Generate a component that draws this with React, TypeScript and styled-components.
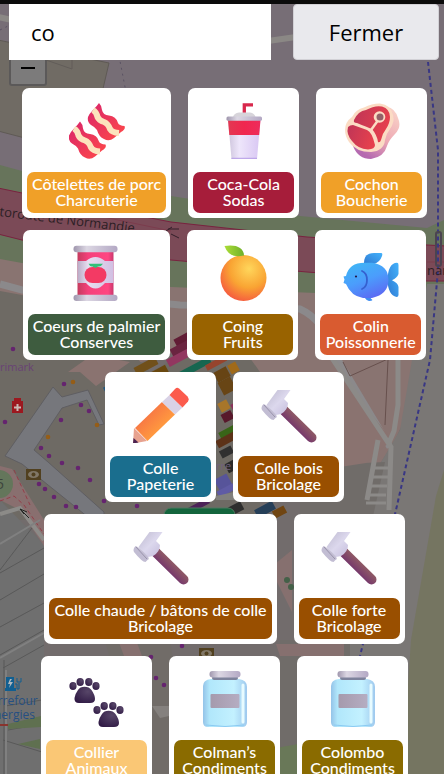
import React, { useState } from "react";
import styled, { createGlobalStyle } from "styled-components";

const GlobalStyle = createGlobalStyle`
  *, *::before, *::after { box-sizing: border-box; }
  html, body { margin: 0; height: 100%; background: #726c6c; }
  button, input { font-family: inherit; }
`;

const Screen = styled.div`
  position: relative;
  display: flex;
  flex-direction: column;
  height: 100vh;
  overflow: hidden;
  border-top: 4px solid #0b0b0b;
  font-family: "Open Sans", "Noto Sans", sans-serif;
`;

const MapLayer = styled.div`
  position: absolute;
  inset: -4px 0 0;
`;

const MapSvg = styled.svg`
  display: block;
  width: 100%;
  height: 100%;
`;

const ZoomOut = styled.button`
  position: absolute;
  left: 9px;
  top: 50px;
  width: 38px;
  height: 36px;
  padding: 0;
  display: grid;
  place-items: center;
  border: 2px solid #5b5959;
  border-radius: 3px;
  background: #7c7b7b;
`;

const SearchBar = styled.form`
  position: relative;
  display: flex;
  gap: 22px;
  padding: 0 5px 0 9px;
`;

const SearchInput = styled.input`
  flex: 1;
  min-width: 0;
  height: 56px;
  padding: 0 22px;
  border: 0;
  border-radius: 0;
  outline: 0;
  background: #fff;
  color: #000;
  font-size: 22px;
`;

const CloseButton = styled.button`
  flex: 0 0 146px;
  height: 56px;
  border: 1px solid #d2d1d6;
  border-radius: 4px;
  background: #e9e9ed;
  color: #000;
  font-size: 22px;
`;

const Results = styled.main`
  position: relative;
  flex: 1;
  min-height: 0;
  overflow-y: auto;
  scrollbar-width: none;
  padding: 28px 12px 28px 17px;
  display: flex;
  flex-wrap: wrap;
  justify-content: center;
  align-content: flex-start;
  gap: 12px 17px;
`;

const Card = styled.button`
  display: flex;
  flex-direction: column;
  align-items: center;
  gap: 13px;
  padding: 15px 5px 5px;
  border: 0;
  border-radius: 7px;
  background: #fff;
`;

const CardIcon = styled.svg`
  display: block;
  width: 56px;
  height: 56px;
`;

const Label = styled.span<{ $color: string }>`
  display: flex;
  flex-direction: column;
  min-width: 101px;
  padding: 4px 5px 5px;
  border-radius: 7px;
  background: ${(p) => p.$color};
  color: #fff;
  font: 500 16px/16px Lato, "Open Sans", sans-serif;
  text-align: center;
  white-space: nowrap;
`;

const gradients = (
  <defs>
    <linearGradient id="bacon" x1="0" y1="0" x2="1" y2="1">
      <stop offset="0" stopColor="#d9256b" /><stop offset="1" stopColor="#ff4a48" />
    </linearGradient>
    <linearGradient id="redBand"><stop offset="0" stopColor="#e33852" /><stop offset=".5" stopColor="#f0274f" /><stop offset="1" stopColor="#ee2c5c" /></linearGradient>
    <linearGradient id="cupBody"><stop offset="0" stopColor="#cdc4dc" /><stop offset=".35" stopColor="#eee6fb" /><stop offset="1" stopColor="#d8c6f3" /></linearGradient>
    <linearGradient id="metal"><stop offset="0" stopColor="#9f96ad" /><stop offset=".3" stopColor="#dcd7e3" /><stop offset="1" stopColor="#b3a8c4" /></linearGradient>
    <linearGradient id="fat" x1="1" y1="0" x2=".4" y2="1"><stop offset="0" stopColor="#fbd9cb" /><stop offset=".6" stopColor="#eda9b4" /><stop offset="1" stopColor="#b56ab0" /></linearGradient>
    <linearGradient id="meat" x1="0" y1="0" x2="1" y2=".3"><stop offset="0" stopColor="#bf3557" /><stop offset="1" stopColor="#e5404d" /></linearGradient>
    <linearGradient id="canBody"><stop offset="0" stopColor="#c53b5e" /><stop offset=".3" stopColor="#f5417b" /><stop offset=".85" stopColor="#ff4682" /><stop offset="1" stopColor="#c9386e" /></linearGradient>
    <linearGradient id="canWhite"><stop offset="0" stopColor="#b9abc5" /><stop offset=".3" stopColor="#e8def1" /><stop offset="1" stopColor="#d1bfe2" /></linearGradient>
    <radialGradient id="fruit" cx=".62" cy=".3" r=".75"><stop offset="0" stopColor="#ffd65b" /><stop offset=".55" stopColor="#f9a433" /><stop offset="1" stopColor="#f5583f" /></radialGradient>
    <linearGradient id="leaf"><stop offset="0" stopColor="#abdd37" /><stop offset="1" stopColor="#6faf2a" /></linearGradient>
    <linearGradient id="fish" x1=".2" y1="0" x2=".7" y2="1"><stop offset="0" stopColor="#3fb6f5" /><stop offset=".5" stopColor="#4b9dfc" /><stop offset="1" stopColor="#5c69f3" /></linearGradient>
    <linearGradient id="fin" x1="0" y1="1" x2="1" y2="0"><stop offset="0" stopColor="#2f78d2" /><stop offset="1" stopColor="#43b2fb" /></linearGradient>
    <linearGradient id="pencil" x1="0" y1="0" x2="1" y2="1"><stop offset=".2" stopColor="#f56e45" /><stop offset=".65" stopColor="#ff983f" /><stop offset="1" stopColor="#f1823c" /></linearGradient>
    <linearGradient id="wood" x1=".7" y1=".3" x2=".35" y2=".65"><stop offset="0" stopColor="#966363" /><stop offset="1" stopColor="#74366c" /></linearGradient>
    <linearGradient id="steel" x1="0" y1="0" x2="1" y2="1"><stop offset="0" stopColor="#bdb9cf" /><stop offset=".5" stopColor="#dcd8ed" /><stop offset="1" stopColor="#c3badb" /></linearGradient>
    <radialGradient id="paw" cx=".65" cy=".3" r=".8"><stop offset="0" stopColor="#574668" /><stop offset="1" stopColor="#301a45" /></radialGradient>
    <linearGradient id="glass"><stop offset="0" stopColor="#94c3e8" /><stop offset=".15" stopColor="#b1e7fb" /><stop offset=".7" stopColor="#c3f1ff" /><stop offset="1" stopColor="#9fc9ee" /></linearGradient>
    <linearGradient id="tag"><stop offset="0" stopColor="#a59aac" /><stop offset="1" stopColor="#b5adc2" /></linearGradient>
  </defs>
);

const baconStrip = (
  <>
    <path d="M30 0Q33 3 33 7Q34 12 40 12.500Q47 13 49 20Q50 22.500 55.500 23Q57 26 52 29L45 35Q40 39 35 36Q30 34 28 27Q26 24 22 22Q18 19 19 14Q20 11 24 7Q28 3 30 0Z" fill="url(#bacon)" />
    <path d="M24 7Q27.500 9 28.500 14Q30 17.500 35 19Q39 20.500 41 26Q43 29.500 50 30" fill="none" stroke="#fce3bd" strokeWidth="6" />
  </>
);

const pawPrint = (
  <g fill="url(#paw)">
    <ellipse cx="4" cy="15" rx="3.600" ry="4" /><ellipse cx="11.200" cy="11" rx="3.700" ry="4.100" />
    <ellipse cx="19.800" cy="11" rx="3.700" ry="4.100" /><ellipse cx="27" cy="15" rx="3.600" ry="4" />
    <path d="M9 19C11 14.500 20 14.500 22.500 19Q26 24 26 28Q26 32 21 32H10Q5 32 5.500 27Q6 23 9 19Z" />
  </g>
);

const icons: Record<string, React.ReactNode> = {
  bacon: <>{baconStrip}<g transform="translate(-19 18.500)">{baconStrip}</g></>,
  cup: (
    <>
      <path d="M28.300 12V1.800H37" fill="none" stroke="#d8284c" strokeWidth="3.300" />
      <path d="M12 16H44.500L41 56H15.500Z" fill="url(#cupBody)" />
      <path d="M12 17H44.500L43.200 32H13.300Z" fill="url(#redBand)" />
      <path d="M15.400 55.300H41" stroke="#b49be6" strokeWidth="1" />
      <path d="M17 14Q18 10 23 9.500H34Q38.500 10 39.500 14Z" fill="#d7d4da" />
      <rect x="10.500" y="13.600" width="35.500" height="4.200" rx="1.500" fill="url(#metal)" />
    </>
  ),
  meat: (
    <>
      <path d="M9 43Q14 56 27 56Q40 54 43 43Q45 37 51 31Q58 24 54 15Q51 5 43 4Z" fill="url(#fat)" />
      <path d="M1 27Q1 19 8 14Q12 6 20 4.500Q28 .500 36 .600Q47 2 49 12Q51 19 46 26Q42 31 41 37Q40 48 27 49Q12 49 5 39Q1 33 1 27Z" fill="#fbdcc4" />
      <path d="M4 24Q6 22 9 22L23 27Q28 29 31 42Q31 46 24 46.500Q14 46 8 38Q2 31 4 24Z" fill="url(#meat)" />
      <path d="M10 17Q14 8 22 7Q31 2 38 3.500Q46 6 46 14Q46 20 42 26Q38 31 37 37Q36 40 34 39Q33 32 28 26Q23 24 13 20Q9 20 10 17Z" fill="url(#meat)" />
      <path d="M27 27L35 16" stroke="#fbdcc4" strokeWidth="2.500" />
      <circle cx="35.500" cy="14" r="5.800" fill="#fbdcc4" /><circle cx="36" cy="14" r="3.500" fill="#936169" />
    </>
  ),
  can: (
    <>
      <rect x="9.500" y="4" width="36" height="50" fill="url(#canBody)" />
      <path d="M9.500 16H18Q27.500 8 37 16H45.500V38H37Q27.500 49 18 38H9.500Z" fill="url(#canWhite)" />
      <rect x="16.500" y="22" width="22" height="16" rx="8" fill="#f33a64" />
      <path d="M20.500 18.800H35Q33 22 30 21.500L27.500 23L24.500 21.500Q22 22 20.500 18.800Z" fill="#32c179" />
      <rect x="5.500" y=".700" width="44" height="6.500" rx="3" fill="url(#metal)" />
      <rect x="5.500" y="49.700" width="44" height="6.300" rx="3" fill="url(#metal)" />
    </>
  ),
  fruit: (
    <>
      <circle cx="28.500" cy="33" r="23" fill="url(#fruit)" />
      <path d="M9.500 1Q20 -.500 25 3Q29 6 29 10.500Q14 14 9.500 1Z" fill="url(#leaf)" />
    </>
  ),
  fish: (
    <>
      <path d="M21 18Q21 8 31 8H38Q40 8 39 11Q37 17 31 19Z" fill="url(#fin)" />
      <path d="M21 52H27Q28 54 29.500 55Q29 56 26 56Q23 55 21 52Z" fill="#3f8df1" />
      <path d="M44.500 35Q45 18 54 17.700Q55.500 17.700 55.500 20V29Q54 33 49 35.300Q55 38 55.500 42V50Q55.500 52 53.500 52Q45 50 44.500 35Z" fill="url(#fin)" />
      <path d="M3 31Q6 17.500 22 17.700H29Q45.500 20 45.500 35Q45.500 49 29 53H20Q8 51 3 39L.500 38L1.500 34.500L.500 31.500Z" fill="url(#fish)" />
      <path d="M19 26Q24 28 24 35Q24 42 19 44" fill="none" stroke="#3560cf" strokeWidth="1.800" strokeLinecap="round" />
      <circle cx="13" cy="31.500" r="1.100" fill="#251744" />
    </>
  ),
  pencil: (
    <>
      <path d="M1 41L14 54L0 56.500Z" fill="#e7a28f" />
      <path d="M.500 51L5.500 55.500L0 56.500Z" fill="#4b2351" />
      <path d="M2 41L29 15L42 27.500L14.500 54Z" fill="url(#pencil)" />
      <path d="M29 15L36.500 8L49.500 20.500L42 27.500Z" fill="#d9d2e6" />
      <path d="M36.500 8L42 2Q44 0 46 1.500L54.500 9.500Q56.500 12 55 14.500L49.500 20.500Z" fill="#fb5b4d" />
    </>
  ),
  hammer: (
    <>
      <path d="M22.500 23L50.500 50.500" stroke="url(#wood)" strokeWidth="10" strokeLinecap="round" />
      <path d="M16.500 3H29.500L23 12L27 16Q27 23 20 27L15 28L5.500 18Z" fill="url(#steel)" />
      <path d="M2.500 17Q5 17 14.500 27Q17 30 14.500 31L12.500 33Q9 33 1 23Q-.500 20 2.500 17Z" fill="#c2bdd3" />
      <path d="M3 18L14 30" stroke="#9993ab" strokeWidth="1" />
    </>
  ),
  paws: <>{pawPrint}<g transform="translate(24 24)">{pawPrint}</g></>,
  jar: (
    <>
      <path d="M14 8H42Q50 9 50 16V51Q50 56 45 56H11Q6 56 6 51V15Q6 9 14 8Z" fill="url(#glass)" />
      <path d="M46 14V51" stroke="#e7fbff" strokeWidth="3" strokeLinecap="round" />
      <path d="M9 54Q28 57 47 54" fill="none" stroke="#8bcaf2" strokeWidth="1" />
      <rect x="15" y="5" width="26" height="4" rx="2" fill="#7e839c" />
      <rect x="12.500" y="0" width="31" height="6.500" rx="3" fill="url(#metal)" />
      <rect x="13.500" y="23" width="29" height="14" rx="1" fill="url(#tag)" />
    </>
  ),
};

type Product = { name: string; aisle: string; icon: string; color: string };

const products: Product[] = [
  { name: "Côtelettes de porc", aisle: "Charcuterie", icon: "bacon", color: "#f0a028" },
  { name: "Coca-Cola", aisle: "Sodas", icon: "cup", color: "#a61d3a" },
  { name: "Cochon", aisle: "Boucherie", icon: "meat", color: "#f0a028" },
  { name: "Coeurs de palmier", aisle: "Conserves", icon: "can", color: "#3e5c3f" },
  { name: "Coing", aisle: "Fruits", icon: "fruit", color: "#996300" },
  { name: "Colin", aisle: "Poissonnerie", icon: "fish", color: "#d95b30" },
  { name: "Colle", aisle: "Papeterie", icon: "pencil", color: "#1a6e8e" },
  { name: "Colle bois", aisle: "Bricolage", icon: "hammer", color: "#994f00" },
  { name: "Colle chaude / bâtons de colle", aisle: "Bricolage", icon: "hammer", color: "#994f00" },
  { name: "Colle forte", aisle: "Bricolage", icon: "hammer", color: "#994f00" },
  { name: "Collier", aisle: "Animaux", icon: "paws", color: "#fac775" },
  { name: "Colman’s", aisle: "Condiments", icon: "jar", color: "#8a6b00" },
  { name: "Colombo", aisle: "Condiments", icon: "jar", color: "#8a6b00" },
];

const purpleDots = [[64, 384], [81, 405], [89, 411], [61, 420], [5, 422], [41, 448], [49, 456], [62, 463], [78, 468], [90, 480], [39, 484], [45, 489], [54, 497], [66, 506], [76, 507], [104, 501], [137, 506], [13, 349], [182, 646], [151, 657], [156, 678], [164, 685]];
const orangeDots = [[73, 382], [97, 425], [48, 437]];

const stalls: [number, number, number, number, string][] = [
  [174, 334, 22, 8, "#611c35"], [170, 343, 26, 8, "#6a2440"], [166, 352, 32, 8, "#923760"], [178, 364, 34, 7, "#176650"],
  [205, 360, 22, 6, "#96442d"], [134, 362, 24, 8, "#71501a"], [148, 369, 20, 8, "#69480f"], [104, 384, 14, 8, "#235a80"],
  [215, 369, 14, 11, "#674414"], [229, 363, 9, 10, "#a06a19"], [220, 379, 14, 14, "#684515"], [232, 402, 10, 10, "#8b315b"],
  [219, 401, 10, 10, "#a8762a"], [222, 412, 11, 9, "#58182b"], [219, 428, 19, 8, "#386518"], [216, 436, 20, 8, "#5c3218"],
  [220, 448, 13, 8, "#303030"], [226, 461, 12, 10, "#292929"], [216, 476, 14, 12, "#57549a"], [217, 487, 18, 7, "#5f5ba5"],
  [229, 504, 14, 9, "#2e2e2e"], [255, 505, 20, 9, "#263f58"], [273, 508, 13, 8, "#704512"], [186, 503, 24, 6, "#4d2358"],
];

function StoreMap() {
  return (
    <MapSvg viewBox="0 0 444 774" preserveAspectRatio="xMidYMid slice" aria-hidden="true">
      {gradients}
      <path fill="#776e76" d="M0 0H444V260H0Z" />
      <path fill="#706b64" stroke="#5f5a55" d="M-2 40L109 63L98 110L90 155L-2 131Z" />
      <path fill="none" stroke="#625d59" d="M46 60L72 69V60" />
      <path fill="none" stroke="#8b8885" strokeWidth="6" d="M-2 17L12 20M268 41L296 37" />
      <path fill="none" stroke="#5a5263" strokeDasharray="2 4" d="M119 56L126 92M0 30L10 25" />
      <path fill="#67745b" d="M0 165L22 171L171 196L300 216L427 228L444 220V300H0Z" />
      <path fill="#897471" d="M0 259L22 263L171 287L316 293L427 290V372L395 440L380 464L345 467L300 400L200 345L80 380L0 300Z" />
      <path fill="#7b4a57" stroke="#79223f" d="M-2 188L22 193L171 222L307 237L427 245L446 246V281H427L307 272L171 260L22 240L-2 234Z" />
      <path stroke="#7b3c4d" d="M22 200L171 231M427 262H444" />
      <path stroke="#321f29" strokeWidth="1" fill="none" d="M168 229H179M166 231L172 227M171 234L179 238" />
      <text transform="translate(-17 214) rotate(7)" fontSize="13" fontWeight="500" fill="#2c2025">Autoroute de Normandie</text>
      <path fill="none" stroke="#8b898b" strokeWidth="7" d="M0 284L22 290L180 305L260 306L300 309Q325 320 338 360L390 447" />
      <path fill="#6e6a64" d="M0 291L22 295L110 330L150 372L230 330L260 372V520H0Z" />
      <path fill="#7a7775" d="M427 284H444V774H300V530L345 467L380 464L400 430L412 360Z" />
      <path fill="#706c69" d="M300 466L385 462L370 530H300ZM280 640H350V774H280Z" />
      <path fill="#8a7370" d="M290 370H336L392 440L366 463L340 467Z" />
      <path fill="#8a7370" d="M68 372L92 355L130 362L96 386L80 372Z" />
      <path fill="none" stroke="#8c8a88" strokeWidth="5" d="M332 358L391 447L389 510M398 350V405L394 431L388 445M378 440L367 500" />
      <path fill="none" stroke="#67504d" d="M343 362L350 376L390 358M388 360L385 425" />
      <path fill="none" stroke="#8c8a88" strokeWidth="3" d="M373 468H389M371 477H388M369 486H387M367 495H386M366 503H386" />
      <path fill="#76777c" stroke="#5f5e62" d="M53 387L62 397L88 390L104 424L99 425L87 400L62 408L34 450L48 462L104 512V530L22 464L5 456Z" />
      <path fill="#6f6f6f" d="M0 500L44 545V774H0Z" />
      <path fill="#896f6f" d="M0 466L12 469L44 520V546L20 510L0 500Z" />
      <path fill="none" stroke="#943e49" strokeDasharray="4 3" d="M0 501L14 496L24 505L44 534M14 470L30 505" />
      <path fill="none" stroke="#8c8b88" strokeWidth="4" d="M0 514L20 508L44 540" />
      <path stroke="#22221f" strokeWidth="1" d="M20 509L29 518M20 509L24 514M20 509L27 512" />
      <path fill="none" stroke="#595959" d="M0 570L32 528M0 573L44 548M0 600L44 574M0 627L44 603M0 655L44 630M3 668L44 645M5 706L42 700M8 730L42 724M3 740L42 752M4 660V774" />
      <path fill="none" stroke="#808080" strokeWidth="2" d="M0 544L40 520M0 658L44 633M6 670V774" />
      <path fill="#5f7050" d="M8 724L41 716V727L8 729ZM18 744L40 739V749Z" />
      <path stroke="#89342e" strokeWidth="2" d="M0 725H8" />
      <circle cx="-1" cy="484" r="14" fill="#64765b" />
      <text x="-4" y="489" fontSize="14" fill="#3d443c">5</text>
      {stalls.map(([x, y, w, h, fill]) => (
        <rect key={`${x}-${y}`} x={x} y={y} width={w} height={h} fill={fill} transform={`rotate(-28 ${x + w / 2} ${y + h / 2})`} />
      ))}
      <path fill="#81807e" d="M216 496L234 492L240 500H216Z" />
      <path fill="#716c68" d="M105 640L170 640L190 774H140Z" />
      <path fill="#86706f" d="M270 568L292 550V612L276 580ZM118 640H136L142 656H124ZM276 644H344V656H280Z" />
      <path fill="#697858" d="M276 748L298 744V774H280Z" />
      <circle cx="287" cy="580" r="3" fill="#446048" /><circle cx="291" cy="587" r="3" fill="#446048" />
      <path fill="#85817e" d="M152 706L169 706V716L160 718Z" />
      <path fill="#757561" d="M436 496L444 470V774H404L407 700L411 640Z" />
      <path fill="none" stroke="#393784" strokeWidth="2" strokeDasharray="4 3" d="M428 62L438 150V270L430 360L396 510L360 656" />
      <rect x="436" y="232" width="5" height="34" rx="2" fill="none" stroke="#4b4450" strokeWidth="2" />
      <text x="427" y="275" fontSize="13" fontWeight="500" fill="#2c2025">nar</text>
      <text x="0" y="371" fontSize="11" fill="#694275">rimark</text>
      <text x="216" y="470" fontSize="11" fill="#72617c">rre</text>
      <rect x="164" y="508" width="71" height="30" rx="7" fill="#14653d" stroke="#4f7960" />
      {purpleDots.map(([x, y]) => <circle key={`${x}-${y}`} cx={x} cy={y} r="2.300" fill="#65246f" />)}
      {orangeDots.map(([x, y]) => <circle key={`${x}-${y}`} cx={x} cy={y} r="2.300" fill="#955d17" />)}
      <path fill="#9c181f" d="M14 398H21V401H23V413H12V401H14Z" />
      <path stroke="#c9b9b5" strokeWidth="2" d="M17.500 404V411M14 407.500H21" />
      {[[26, 469], [199, 648]].map(([x, y]) => (
        <g key={x}>
          <rect x={x} y={y} width="15" height="11" fill="#51401f" />
          <ellipse cx={x + 7.500} cy={y + 5.500} rx="5.500" ry="3.500" fill="#817767" />
          <circle cx={x + 7.500} cy={y + 5.500} r="2" fill="#51401f" />
        </g>
      ))}
      <path fill="#115f91" d="M6 677H14V688H16V691H5V688H6Z" />
      <path fill="none" stroke="#115f91" strokeWidth="1" d="M15 684H17V689H19V683M17 678V682H21V678" />
      <path fill="#b0b8be" d="M10 679L8 684H10L9 688L13 682H10L12 679Z" />
      <g fontSize="12" fill="#264f82">
        <text x="-9" y="705">arrefour</text>
        <text x="-6" y="719">nergies</text>
      </g>
    </MapSvg>
  );
}

export default function App() {
  const [query, setQuery] = useState("co");
  return (
    <>
      <GlobalStyle />
      <Screen>
        <MapLayer>
          <StoreMap />
          <ZoomOut type="button" aria-label="Zoom arrière">
            <svg width="14" height="2"><rect width="14" height="2" fill="#000" /></svg>
          </ZoomOut>
        </MapLayer>
        <SearchBar onSubmit={(e) => e.preventDefault()}>
          <SearchInput aria-label="Rechercher un produit" value={query} onChange={(e) => setQuery(e.target.value)} />
          <CloseButton type="button">Fermer</CloseButton>
        </SearchBar>
        <Results>
          {products.map((p) => (
            <Card key={p.name} type="button">
              <CardIcon viewBox="0 0 56 56" aria-hidden="true">{icons[p.icon]}</CardIcon>
              <Label $color={p.color}>
                <span>{p.name}</span>
                <span>{p.aisle}</span>
              </Label>
            </Card>
          ))}
        </Results>
      </Screen>
    </>
  );
}
